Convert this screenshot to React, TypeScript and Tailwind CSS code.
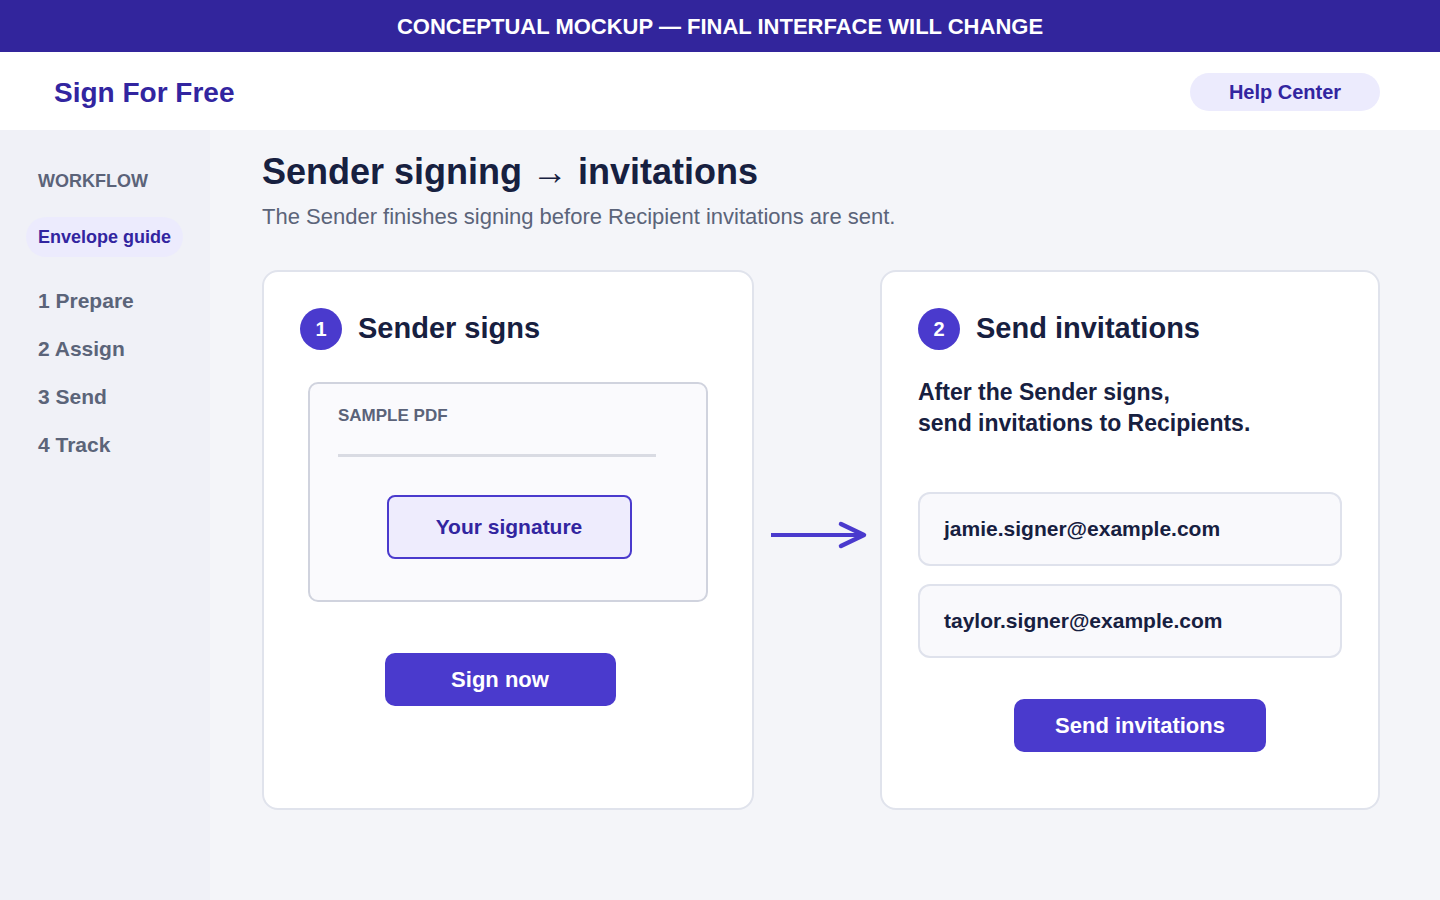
const font = { fontFamily: '"Liberation Sans", Arial, sans-serif' };

const steps = ['1 Prepare', '2 Assign', '3 Send', '4 Track'];
const recipients = ['jamie.signer@example.com', 'taylor.signer@example.com'];

function StepBadge({ n }: { n: number }) {
  return (
    <div className="flex h-[42px] w-[42px] shrink-0 items-center justify-center rounded-full bg-[#4a3acd] text-[20px] font-bold text-white">
      {n}
    </div>
  );
}

function FlowArrow() {
  return (
    <svg width="100" height="34" viewBox="0 0 100 34" fill="none">
      <path d="M2 17H94" stroke="#4a3acd" strokeWidth="4" />
      <path d="M72 6L95 17L72 28" stroke="#4a3acd" strokeWidth="4.5" strokeLinecap="round" strokeLinejoin="round" />
    </svg>
  );
}

export default function App() {
  return (
    <div className="flex min-h-screen flex-col bg-[#f4f5f9] text-[#172040]" style={font}>
      <div className="flex h-[52px] items-center justify-center bg-[#32259c] text-[22px] font-bold text-white">
        CONCEPTUAL MOCKUP — FINAL INTERFACE WILL CHANGE
      </div>

      <header className="flex h-[78px] items-center justify-between bg-white pl-[54px] pr-[60px] pt-[2px]">
        <span className="pt-[2px] text-[28px] font-bold text-[#3225a0]">Sign For Free</span>
        <button className="h-[38px] w-[190px] rounded-full bg-[#ecebfd] text-[20px] font-bold text-[#3225a0]">
          Help Center
        </button>
      </header>

      <div className="flex flex-1">
        <aside className="w-[210px] shrink-0 bg-[#f0f1f7] px-[26px] pt-[39px]">
          <div className="pl-3 text-[18px] font-bold leading-6 text-[#5b6379]">WORKFLOW</div>
          <div className="mt-6 inline-flex h-10 items-center rounded-full bg-[#ecebfd] px-3 text-[18px] font-bold text-[#3225a0]">
            Envelope guide
          </div>
          <nav className="mt-[30px] flex flex-col gap-5 pl-3">
            {steps.map((s) => (
              <span key={s} className="text-[21px] font-bold leading-7 text-[#5b6479]">
                {s}
              </span>
            ))}
          </nav>
        </aside>

        <main className="flex-1 pl-[52px] pt-[22px]">
          <h1 className="text-[36px] font-bold leading-10 text-[#172040]">Sender signing → invitations</h1>
          <p className="mt-[11px] text-[22px] leading-7 text-[#5b6479]">
            The Sender finishes signing before Recipient invitations are sent.
          </p>

          <div className="mt-[39px] grid grid-cols-[492px_126px_500px]">
            <section className="h-[540px] rounded-2xl border-2 border-[#e0e3ec] bg-white px-[36px] pt-[35px]">
              <div className="flex items-center gap-4">
                <StepBadge n={1} />
                <h2 className="text-[29px] font-bold">Sender signs</h2>
              </div>
              <div className="ml-2 mt-[31px] h-[220px] w-[400px] rounded-[10px] border-2 border-[#d0d3de] bg-[#fafafd] px-7 pt-[21px]">
                <div className="text-[17px] font-bold leading-[22px] text-[#5b6379]">SAMPLE PDF</div>
                <div className="mt-[27px] h-[3px] w-[318px] bg-[#d9dbe3]" />
                <div className="mt-[38px] flex justify-center pl-[2px]">
                  <div className="flex h-16 w-[245px] items-center justify-center rounded-lg border-2 border-[#4a3acd] bg-[#eeecfd] text-[21px] font-bold text-[#3225a0]">
                    Your signature
                  </div>
                </div>
              </div>
              <div className="mt-[51px] flex justify-center pr-4">
                <button className="h-[53px] w-[231px] rounded-[10px] bg-[#4a3acd] text-[22px] font-bold text-white">
                  Sign now
                </button>
              </div>
            </section>

            <div className="flex items-center justify-center pb-[10px] pl-[4px]">
              <FlowArrow />
            </div>

            <section className="h-[540px] rounded-2xl border-2 border-[#e0e3ec] bg-white px-[36px] pt-[35px]">
              <div className="flex items-center gap-4">
                <StepBadge n={2} />
                <h2 className="text-[29px] font-bold">Send invitations</h2>
              </div>
              <p className="mt-[26px] text-[23px] font-bold leading-[31px]">
                After the Sender signs,
                <br />
                send invitations to Recipients.
              </p>
              <div className="mt-[53px] flex flex-col gap-[18px]">
                {recipients.map((r) => (
                  <div
                    key={r}
                    className="flex h-[74px] items-center rounded-xl border-2 border-[#dfe2ec] bg-[#f9f9fc] px-6 text-[21px] font-bold"
                  >
                    {r}
                  </div>
                ))}
              </div>
              <div className="mt-[41px] flex justify-center pl-5">
                <button className="h-[53px] w-[252px] rounded-[10px] bg-[#4a3acd] text-[22px] font-bold text-white">
                  Send invitations
                </button>
              </div>
            </section>
          </div>
        </main>
      </div>
    </div>
  );
}
